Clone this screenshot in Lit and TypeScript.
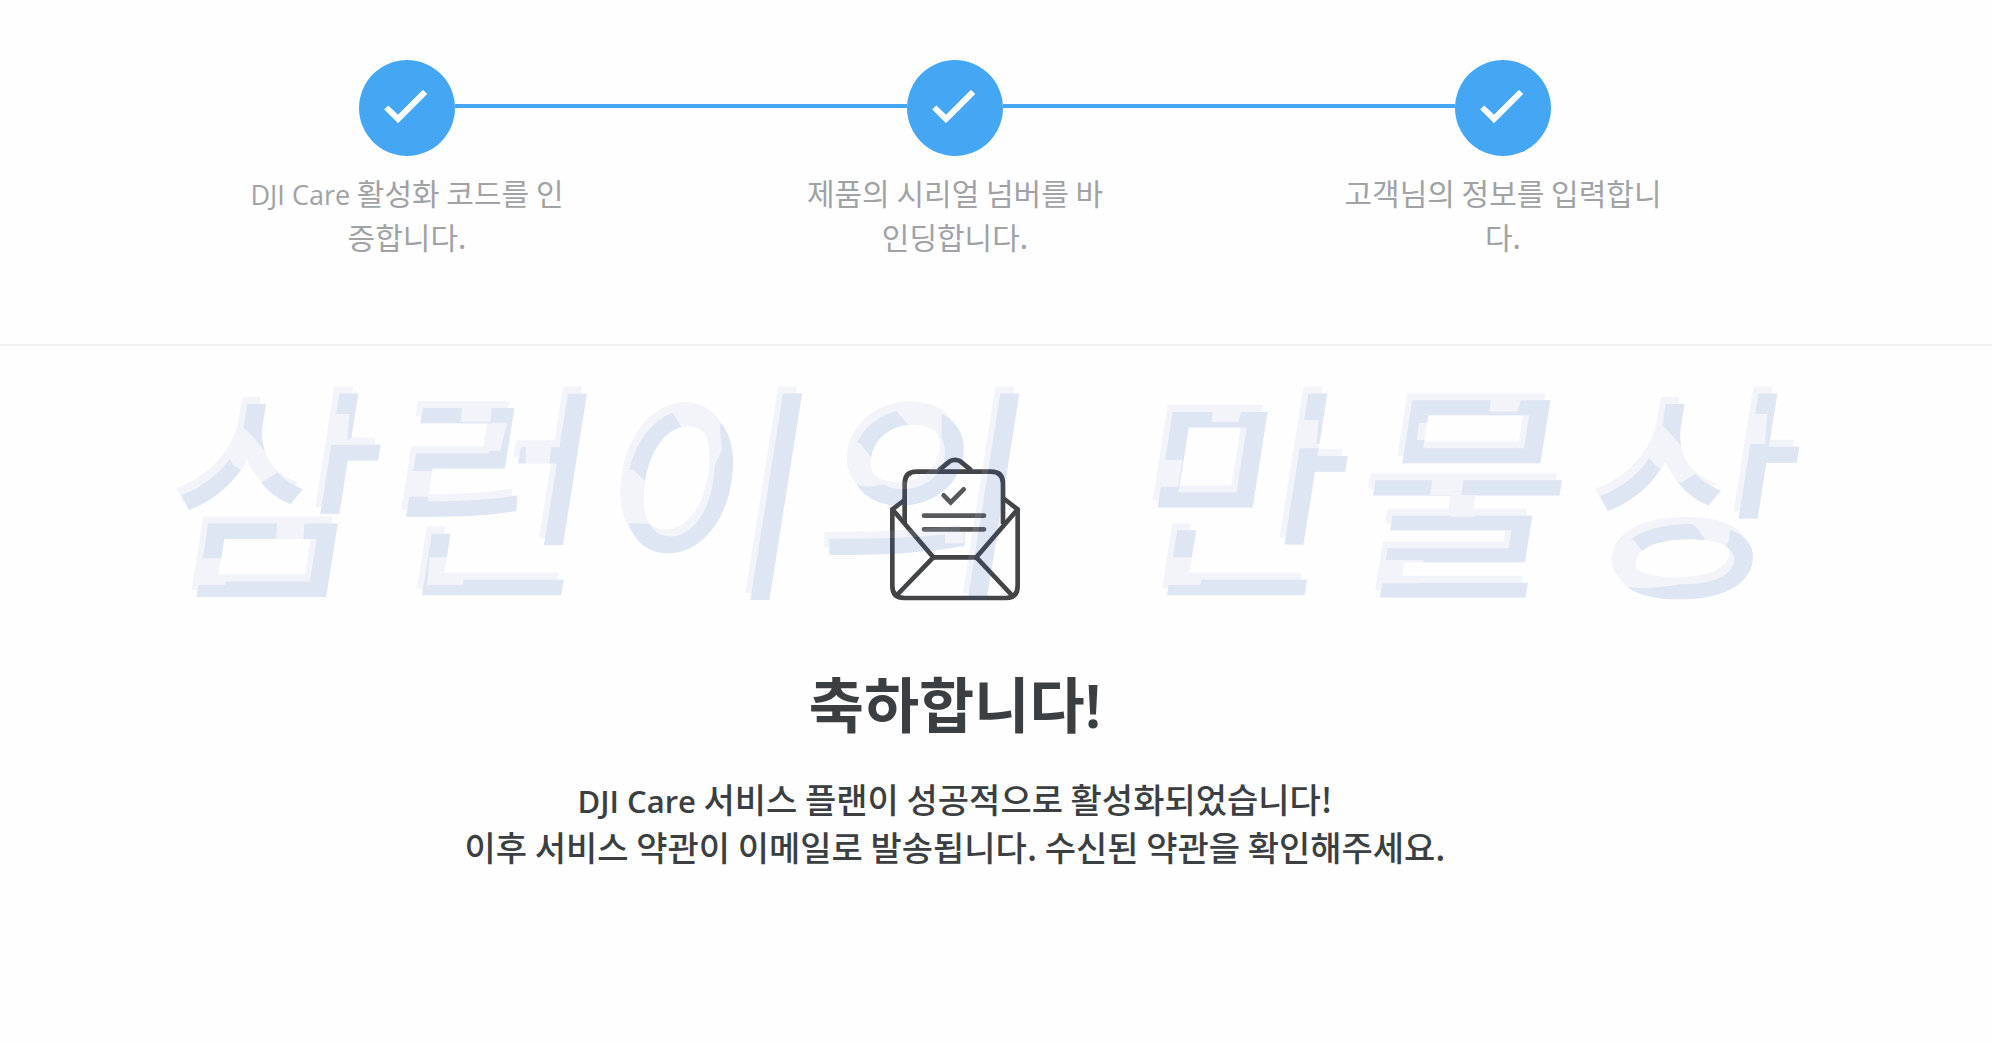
import { LitElement, html, svg, css } from "lit";
import { customElement, property } from "lit/decorators.js";

const HANGUL = css`"Noto Sans CJK KR", sans-serif`;
const LATIN = css`"Open Sans", "Noto Sans", sans-serif`;

@customElement("care-step")
class CareStep extends LitElement {
  @property({ attribute: false }) latin = "";
  @property({ attribute: false }) lines: string[] = [];

  static styles = css`
    :host {
      display: flex;
      flex-direction: column;
      align-items: center;
      gap: 14px;
    }
    .rail {
      display: flex;
      align-items: center;
      width: 100%;
    }
    .bar {
      flex: 1;
      height: 4px;
      margin-bottom: 4px;
      background: #45a7f3;
    }
    :host(:first-of-type) .before,
    :host(:last-of-type) .after {
      background: none;
    }
    .badge {
      display: block;
      width: 96px;
      height: 96px;
    }
    .label {
      margin: 0;
      font: 400 30px/44px ${HANGUL};
      color: #a0a2a5;
      text-align: center;
      white-space: nowrap;
    }
    .latin {
      font: 400 27px/1 ${LATIN};
    }
  `;

  render() {
    return html`
      <div class="rail">
        <span class="bar before"></span>
        <svg class="badge" viewBox="0 0 288 288" aria-hidden="true">
          <circle cx="144" cy="144" r="144" fill="#45a7f3" />
          <path
            d="M77 148 88 138 117 166 192 91 203 102 117 188Z"
            fill="#fff"
            stroke="#fff"
            stroke-width="3"
            stroke-linejoin="round"
          />
        </svg>
        <span class="bar after"></span>
      </div>
      <p class="label">
        ${this.latin ? html`<span class="latin">${this.latin}</span> ` : ""}${this.lines[0]}<br />${this.lines[1]}
      </p>
    `;
  }
}

const GLYPHS = "삼런이의만물상".split("");
const GLYPH_X = [182, 401, 617, 835, 1151, 1373, 1601];

/* Facets of the bevel that stay light, grouped by the scale they are drawn in. */
const FACETS = [
  {
    transform: "translate(160 340) scale(.4209 .3333)",
    points: [
      "185,250 220,288 285,392 240,430 175,375 150,325",
      "380,222 450,222 445,300 475,290 465,315 385,315",
      "280,530 345,530 340,600 275,600",
      "75,655 165,655 155,735 75,735",
      "718,180 790,180 785,245 715,245",
      "790,248 825,248 808,332 780,332",
      "585,393 655,393 645,470 580,470",
      "870,310 930,310 925,375 868,375",
      "640,652 730,652 720,735 635,735",
      "1210,200 1340,200 1330,260 1335,330 1310,400 1250,285",
      "1085,390 1125,390 1158,430 1230,540 1190,552 1110,550",
    ],
  },
  {
    transform: "translate(800 340) scale(.3333)",
    points: [
      "270,190 425,190 425,290 400,330 325,255",
      "140,300 180,310 220,360 280,430 200,440 160,430",
      "435,540 495,540 490,610 435,610",
    ],
  },
  {
    transform: "translate(1120 340) scale(.4464 .3333)",
    points: [
      "210,180 280,180 265,245 205,245",
      "75,360 140,360 130,440 75,440",
      "390,240 445,240 440,312 465,310 460,325 385,325",
      "105,652 190,652 180,735 100,735",
      "832,150 905,150 890,215 828,215",
      "670,248 735,248 725,300 665,300",
      "700,415 770,415 765,465 800,465 795,530 740,530 745,465 695,465",
      "580,660 680,660 670,730 580,730",
      "1210,250 1240,290 1300,392 1255,430 1198,375 1170,325",
      "1395,222 1450,222 1445,312 1395,312",
      "1240,505 1370,505 1365,600 1340,650 1290,560",
      "1110,590 1150,600 1190,665 1250,735 1180,745 1110,740",
    ],
  },
];

@customElement("app-root")
class AppRoot extends LitElement {
  static styles = css`
    :host {
      display: block;
      position: relative;
      min-height: 100vh;
      background: #fefefe;
      font-family: ${HANGUL};
      color: #3b3f42;
    }
    .steps {
      display: grid;
      grid-template-columns: repeat(3, 1fr);
      padding: 60px 215px 86px 133px;
      border-bottom: 2px solid #f1f2f3;
    }
    .result {
      display: flex;
      flex-direction: column;
      align-items: center;
      padding: 110px 82px 110px 0;
      text-align: center;
    }
    .mail {
      width: 134px;
      height: 146px;
    }
    .title {
      margin: 59px 0 0;
      font: 600 60px/88px "Noto Sans", ${HANGUL};
    }
    .text {
      margin: 26px 0 0;
      font: 500 34px/48px ${HANGUL};
    }
    .latin {
      font: 600 31px/1 ${LATIN};
    }
    .watermark {
      position: absolute;
      top: 300px;
      left: 120px;
      width: 1752px;
      height: 380px;
      opacity: 0.15;
      pointer-events: none;
      font: 400 228px ${HANGUL};
    }
    .light {
      fill: #b4c0e0;
    }
    .dark {
      fill: #2f5db8;
    }
  `;

  render() {
    return html`
      <section class="steps">
        <care-step .latin=${"DJI Care"} .lines=${["활성화 코드를 인", "증합니다."]}></care-step>
        <care-step .lines=${["제품의 시리얼 넘버를 바", "인딩합니다."]}></care-step>
        <care-step .lines=${["고객님의 정보를 입력합니", "다."]}></care-step>
      </section>
      <main class="result">
        <svg
          class="mail"
          viewBox="264 348 402 438"
          fill="none"
          stroke="#434446"
          stroke-width="14"
          stroke-linejoin="round"
          aria-hidden="true"
        >
          <path d="M277 508V738Q277 774 313 774H617Q653 774 653 738V508" />
          <path d="M314 552V431Q314 395 350 395H573Q609 395 609 431V552" />
          <path d="M416 391 449 364Q465 355 481 364L514 391" />
          <path d="M314 480 277 508 400 652H529L653 508 609 474" />
          <path d="M400 652 288 768M529 652 638 768" />
          <g stroke="#58595b" stroke-linecap="round">
            <path d="M431 466 452 487 491 448" stroke-linejoin="miter" />
            <path d="M372 527H552M372 568H552" />
          </g>
        </svg>
        <h1 class="title">축하합니다!</h1>
        <p class="text">
          <span class="latin">DJI Care</span> 서비스 플랜이 성공적으로 활성화되었습니다!<br />이후 서비스 약관이
          이메일로 발송됩니다. 수신된 약관을 확인해주세요.
        </p>
      </main>
      <svg class="watermark" viewBox="120 300 1752 380" aria-hidden="true">
        <mask id="facets" maskUnits="userSpaceOnUse" x="120" y="300" width="1752" height="380">
          <rect x="120" y="300" width="1752" height="380" fill="#fff" />
          ${FACETS.map(
            (f) => svg`<g transform=${f.transform}>${f.points.map((p) => svg`<polygon points=${p} />`)}</g>`
          )}
        </mask>
        <g class="light">
          <g id="word" transform="translate(0 385) skewX(-9)">
            ${GLYPHS.map((g, i) => svg`<text x=${GLYPH_X[i]} y="190">${g}</text>`)}
          </g>
          <use href="#word" x="5" y="7" />
        </g>
        <g class="dark" mask="url(#facets)"><use href="#word" x="5" y="7" /></g>
      </svg>
    `;
  }
}
